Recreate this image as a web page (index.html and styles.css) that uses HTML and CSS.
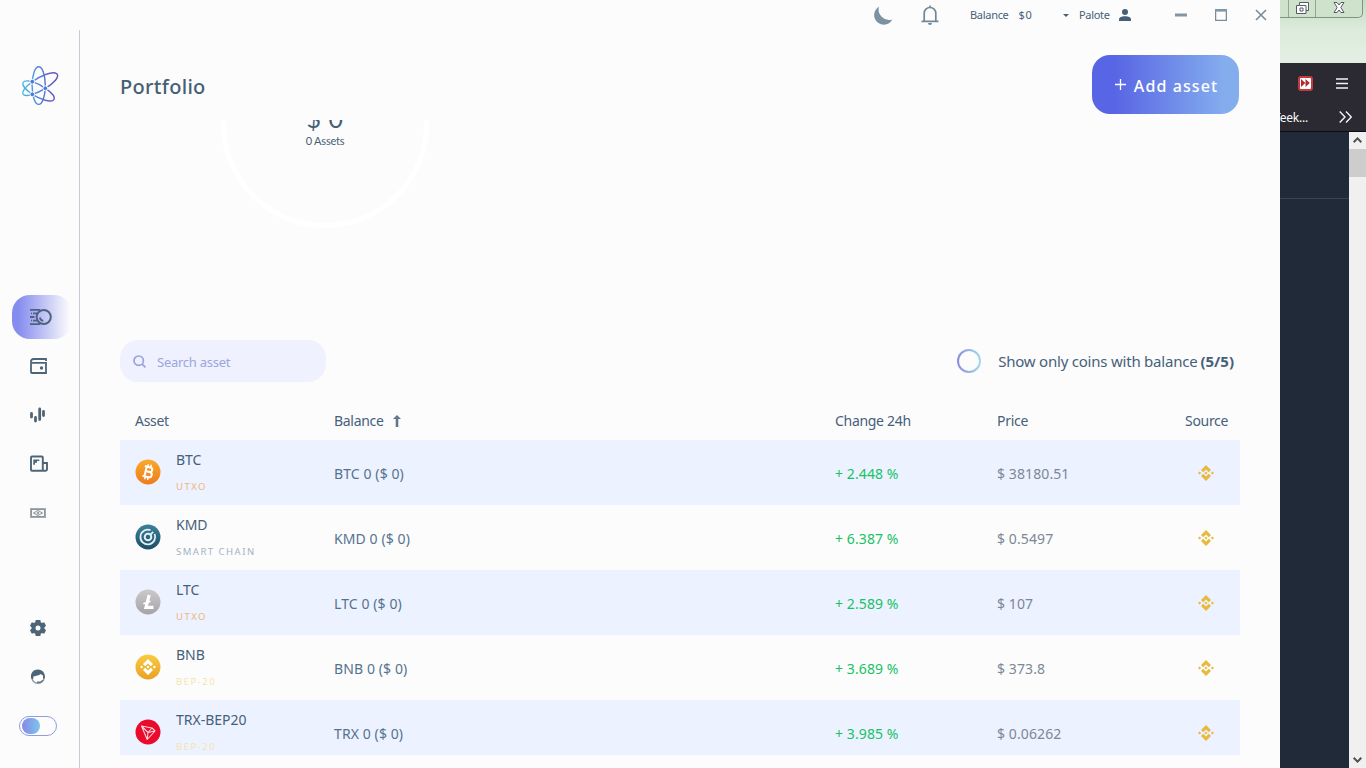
FILE: index.html
```html
<!DOCTYPE html>
<html lang="en">
<head>
    <meta charset="UTF-8">
    <meta name="viewport" content="width=device-width, initial-scale=1.0">
    <title>Portfolio</title>
    <link rel="stylesheet" href="styles.css">
</head>
<body>
    <!-- shared gradients and symbols -->
    <svg class="defs" width="0" height="0">
        <defs>
            <linearGradient id="logoGrad" x1="0" y1="0" x2="40" y2="0" gradientUnits="userSpaceOnUse">
                <stop offset="0" stop-color="#3fc4e6"/>
                <stop offset=".45" stop-color="#5585da"/>
                <stop offset="1" stop-color="#6a45b4"/>
            </linearGradient>
            <linearGradient id="btcGrad" x1="0" y1="0" x2="0" y2="1">
                <stop offset="0" stop-color="#f9aa2b"/>
                <stop offset="1" stop-color="#ee7c1c"/>
            </linearGradient>
            <linearGradient id="kmdGrad" x1="0" y1="0" x2="0" y2="1">
                <stop offset="0" stop-color="#3a8298"/>
                <stop offset="1" stop-color="#1b4f68"/>
            </linearGradient>
            <linearGradient id="ltcGrad" x1="0" y1="0" x2="0" y2="1">
                <stop offset="0" stop-color="#cbc9ca"/>
                <stop offset="1" stop-color="#a5a4a6"/>
            </linearGradient>
            <linearGradient id="bnbGrad" x1="0" y1="0" x2="0" y2="1">
                <stop offset="0" stop-color="#f8cc3e"/>
                <stop offset="1" stop-color="#eaa027"/>
            </linearGradient>
        </defs>
        <symbol id="binance" viewBox="0 0 16 16">
            <path d="M8 0l5 5-2.200 2.200L8 4.400 5.200 7.200 3 5zM8 16l5-5-2.200-2.200L8 11.600 5.200 8.800 3 11zM1.600 6.400L3.200 8 1.600 9.600 0 8zM14.400 6.400L16 8l-1.600 1.600L12.800 8zM8 6.500L9.500 8 8 9.500 6.500 8z"/>
        </symbol>
    </svg>

    <div class="desktop">
        <div class="app">
            <header class="titlebar">
                <svg class="moon" width="20" height="20" viewBox="0 0 20 20"><path d="M6 .8A9.600 9.600 0 1 0 19.300 13.500 10.500 10.500 0 0 1 6 .8z"/></svg>
                <svg class="bell" width="18" height="20" viewBox="0 0 18 20"><path d="M9 .4v2M3.200 16V8.300a5.800 5.800 0 0 1 11.600 0V16M.5 16.300h17"/><path class="clapper" d="M7 18h4a2 2 0 0 1-4 0z"/></svg>
                <div class="balance"><span>Balance</span><span class="sum">$0</span></div>
                <div class="user">
                    <i class="caret"></i>
                    <span>Palote</span>
                    <svg width="12" height="12" viewBox="0 0 12 12"><circle cx="6" cy="3" r="3"/><path d="M0 12v-1.500C0 8.500 2.500 7.300 6 7.300s6 1.200 6 3.200V12z"/></svg>
                </div>
                <div class="window-buttons">
                    <svg width="12" height="12" viewBox="0 0 12 12"><path class="fill" d="M0 4.500h12v3H0z"/></svg>
                    <svg width="12" height="12" viewBox="0 0 12 12"><path d="M.6.600h10.800v10.800H.6z"/><path class="fill" d="M0 0h12v2.600H0z"/></svg>
                    <svg width="12" height="12" viewBox="0 0 12 12"><path class="cross" d="M1 1l10 10M11 1L1 11"/></svg>
                </div>
            </header>

            <div class="layout">
                <aside class="sidebar">
                    <svg class="logo" width="40" height="40" viewBox="0 0 40 40">
                        <g fill="none" stroke="url(#logoGrad)" stroke-width="1.400">
                            <ellipse cx="18.700" cy="19.600" rx="6.600" ry="18.800"/>
                            <path d="M12.300 15.700C20 10 32 5 36.500 7.500c4 3-3 10-11.200 14.800-4 2.500-8.500 4.700-13 6-4.500 1.400-8.600 1.300-9.300-.3-1-3 3.500-8 9.300-12.300z"/>
                            <path d="M12.300 28.300C20 33 30 37 33.500 34c2.500-2.500-1.500-7.500-8.200-11.700-4-2.700-8.500-5.200-13-6.600-4.500-1.200-8.300-.9-9.300.8-1.200 2.700 3.500 7.800 9.300 11.800z"/>
                        </g>
                        <g fill="#4b7bd4" stroke="#fcfcfc" stroke-width="1"><circle cx="12.300" cy="15.700" r="2.400"/><circle cx="12.300" cy="28.300" r="2.400"/><circle cx="25.300" cy="22.300" r="2.400"/></g>
                    </svg>
                    <nav class="nav">
                        <a class="nav-item active">
                            <svg width="22" height="18" viewBox="0 0 22 18"><g fill="none" stroke="#4d6180"><circle cx="13.700" cy="9" r="7.100" stroke-width="2"/><path d="M0 1.900h10M3 5.400h4M0 9h4.500M3 12.600h4M0 16.100h10" stroke-width="1.800"/><path d="M1 5.400h1M1 12.600h1" stroke-width="1.500"/><path d="M9.800 9.500a4 4 0 0 0 3.500 3.300" stroke-width="1.700"/></g></svg>
                        </a>
                        <a class="nav-item">
                            <svg width="18" height="18" viewBox="0 0 18 18"><g fill="none" stroke="#4d6577" stroke-width="1.800"><path d="M16 4V2H3.500A2.500 2.500 0 0 0 1 4.500V15a1 1 0 0 0 1 1h14V5.800H2"/></g><circle cx="11.500" cy="11" r="1.700" fill="#4d6577"/></svg>
                        </a>
                        <a class="nav-item">
                            <svg width="18" height="18" viewBox="0 0 18 18"><g stroke="#4d6577" stroke-width="2.800" stroke-linecap="round"><path d="M1.500 7.500V11M5.500 11.500V15M9.700 3v10.500M13.500 5.500v4"/></g></svg>
                        </a>
                        <a class="nav-item">
                            <svg width="18" height="18" viewBox="0 0 18 18"><g fill="none" stroke="#4d6577" stroke-width="1.900"><path d="M12.800 15.600V2.500a1 1 0 0 0-1-1H2a1 1 0 0 0-1 1v12.200a1 1 0 0 0 1 1h13.500a1.500 1.500 0 0 0 1.500-1.500V8h-4"/></g><path d="M3.300 4.500h6v1.600H7v1.600H5v2H3.300z" fill="#4d6577"/></svg>
                        </a>
                        <a class="nav-item">
                            <svg width="17" height="12" viewBox="0 0 17 12"><path fill="#a3a9ac" d="M0 1h16v10H0z"/><path fill="#f7f7f7" d="M2 3h12v6H2z"/><path fill="none" stroke="#8c9499" d="M1.500 2.500h13v7h-13zM3.500 6L8 3.500 12.500 6 8 8.500z"/><circle cx="8" cy="6" r="1.300" fill="#9aa2a6"/></svg>
                        </a>
                    </nav>
                    <div class="nav nav-bottom">
                        <a class="nav-item">
                            <svg width="16" height="16" viewBox="0 0 16 16"><path fill="#4d6577" fill-rule="evenodd" d="M5.700 0h4.600l.5 2.300 1.200.7 2.200-.7 1.800 3.500L14.400 7.400v1.200L16 10.200l-1.800 3.500-2.200-.7-1.200.7-.5 2.300H5.700l-.5-2.300L4 13l-2.200.7L0 10.200l1.600-1.600V7.400L0 5.800l1.800-3.500L4 3l1.200-.7zM8 5.500a2.500 2.500 0 1 0 0 5 2.500 2.500 0 0 0 0-5z"/></svg>
                        </a>
                        <a class="nav-item">
                            <svg width="16" height="16" viewBox="0 0 16 16"><circle cx="8" cy="8" r="6.300" fill="#fff" stroke="#8293a0" stroke-width="1.200"/><path fill="#4d6577" d="M1 9C.5 4 3.500.600 8 .600s7.500 3.500 6.600 8.900H13V6.500L10.500 5C9 6.800 6 6.500 3.500 7.500L3 10.500z"/><path fill="none" stroke="#66798a" stroke-width="1.400" d="M7 13.200h3.500l2.500-2"/></svg>
                        </a>
                        <a class="nav-item"><span class="switch"></span></a>
                    </div>
                </aside>

                <main class="main">
                    <div class="page-head">
                        <h1>Portfolio</h1>
                        <button class="add-button"><svg width="11" height="11" viewBox="0 0 11 11"><path d="M5.500 0v11M0 5.500h11"/></svg>Add asset</button>
                    </div>

                    <div class="scroll">
                        <section class="chart">
                            <div class="donut">
                                <div class="donut-total">$ 0</div>
                                <div class="donut-count">0 Assets</div>
                            </div>
                        </section>

                        <div class="filters">
                            <div class="search">
                                <svg width="13" height="13" viewBox="0 0 13 13"><circle cx="5.700" cy="5.700" r="4.700"/><path d="M9.200 9.200l3.200 3.200"/></svg>
                                <span>Search asset</span>
                            </div>
                            <label class="only-balance">
                                <i class="radio"></i>
                                <span>Show only coins with balance</span><b>(5/5)</b>
                            </label>
                        </div>

                        <div class="table">
                            <div class="row head">
                                <span>Asset</span>
                                <span>Balance <svg class="sort" width="8" height="12" viewBox="0 0 8 12"><path d="M4 0l4 4H5.300v8H2.700V4H0z"/></svg></span>
                                <span>Change 24h</span>
                                <span>Price</span>
                                <span>Source</span>
                            </div>
                            <div class="row">
                                <div class="asset">
                                    <svg class="coin" viewBox="0 0 26 26"><circle cx="13" cy="13" r="12.500" fill="url(#btcGrad)"/><g transform="rotate(14 13 13)" fill="none" stroke="#fff" stroke-width="2"><path d="M8.500 8h5.800a2.300 2.300 0 0 1 0 4.700h-4M10.500 12.700h4.300a2.600 2.600 0 0 1 0 5.200H8.500M10.500 8v10"/><path d="M11.500 5.200V8M14.500 5.200V8M11.500 18v2.800M14.500 18v2.800" stroke-width="1.500"/></g></svg>
                                    <div><div class="name">BTC</div><div class="tag utxo">UTXO</div></div>
                                </div>
                                <span class="amount">BTC 0 ($ 0)</span>
                                <span class="change">+ 2.448 %</span>
                                <span class="price">$ 38180.51</span>
                                <svg class="source"><use href="#binance"/></svg>
                            </div>
                            <div class="row">
                                <div class="asset">
                                    <svg class="coin" viewBox="0 0 26 26"><circle cx="13" cy="13" r="12.500" fill="url(#kmdGrad)"/><g fill="none" stroke="#e4f0f4" stroke-width="1.800"><path d="M15.500 6.100A7.400 7.400 0 1 0 19.600 10"/><circle cx="13" cy="13" r="3.300" stroke-width="2"/><path d="M15.200 10.800l3-3"/></g></svg>
                                    <div><div class="name">KMD</div><div class="tag smart">SMART CHAIN</div></div>
                                </div>
                                <span class="amount">KMD 0 ($ 0)</span>
                                <span class="change">+ 6.387 %</span>
                                <span class="price">$ 0.5497</span>
                                <svg class="source"><use href="#binance"/></svg>
                            </div>
                            <div class="row">
                                <div class="asset">
                                    <svg class="coin" viewBox="0 0 26 26"><circle cx="13" cy="13" r="12.500" fill="url(#ltcGrad)"/><path d="M14.200 6l-3.200 12.300h7.500" fill="none" stroke="#fff" stroke-width="3.200"/><path d="M8.300 14.800l7.200-2.600" fill="none" stroke="#fff" stroke-width="1.500"/></svg>
                                    <div><div class="name">LTC</div><div class="tag utxo">UTXO</div></div>
                                </div>
                                <span class="amount">LTC 0 ($ 0)</span>
                                <span class="change">+ 2.589 %</span>
                                <span class="price">$ 107</span>
                                <svg class="source"><use href="#binance"/></svg>
                            </div>
                            <div class="row">
                                <div class="asset">
                                    <svg class="coin" viewBox="0 0 26 26"><circle cx="13" cy="13" r="12.500" fill="url(#bnbGrad)"/><use href="#binance" x="5" y="5" width="16" height="16" fill="#fff"/></svg>
                                    <div><div class="name">BNB</div><div class="tag bep">BEP-20</div></div>
                                </div>
                                <span class="amount">BNB 0 ($ 0)</span>
                                <span class="change">+ 3.689 %</span>
                                <span class="price">$ 373.8</span>
                                <svg class="source"><use href="#binance"/></svg>
                            </div>
                            <div class="row">
                                <div class="asset">
                                    <svg class="coin" viewBox="0 0 26 26"><circle cx="13" cy="13" r="12.500" fill="#e90a2c"/><path d="M6.500 7l10.500 2 3 3-7.800 8.500zM6.500 7l6.500 6.500 4-4.500M13 13.500l7-1.500M13 13.500l-.8 7" fill="none" stroke="#fbd5db" stroke-width="1.100" stroke-linejoin="round"/></svg>
                                    <div><div class="name">TRX-BEP20</div><div class="tag bep">BEP-20</div></div>
                                </div>
                                <span class="amount">TRX 0 ($ 0)</span>
                                <span class="change">+ 3.985 %</span>
                                <span class="price">$ 0.06262</span>
                                <svg class="source"><use href="#binance"/></svg>
                            </div>
                        </div>
                    </div>
                </main>
            </div>
        </div>

        <!-- browser window behind the app -->
        <div class="browser">
            <div class="glass">
                <div class="caption">
                    <span class="cap-min"></span>
                    <span class="cap-max"><svg width="13" height="12" viewBox="0 0 13 12"><path d="M3.500.500h9v8h-2.500v3H.5v-8h3z" fill="#fff" stroke="#555a66"/><path d="M3.500 3.500H10v5M4 6h3v3H4z" fill="none" stroke="#555a66"/></svg></span>
                    <span class="cap-close"><svg width="12" height="11" viewBox="0 0 12 11"><path d="M1 .500h3L6 3 8 .500h3L7.800 5.500 11 10.500H8L6 8l-2 2.500H1l3.200-5z" fill="#fff" stroke="#555a66"/></svg></span>
                </div>
            </div>
            <div class="toolbar">
                <div class="tool-row">
                    <span class="ext"><svg width="9" height="8" viewBox="0 0 9 8"><path d="M0 0l4.300 4L0 8zM4.500 0l4.300 4-4.300 4z"/></svg></span>
                    <svg width="12" height="11" viewBox="0 0 12 11"><path d="M0 1h12M0 5.500h12M0 10h12"/></svg>
                </div>
                <div class="tool-row bookmarks">
                    <span>Teek...</span>
                    <svg width="13" height="12" viewBox="0 0 13 12"><path d="M.7.500L6 6 .7 11.500M7 .500L12.300 6 7 11.500"/></svg>
                </div>
            </div>
            <div class="page">
                <div class="page-body"></div>
                <div class="scrollbar">
                    <svg width="9" height="6" viewBox="0 0 9 6"><path d="M.7 5.200L4.500 1.400l3.800 3.800"/></svg>
                    <div class="thumb"></div>
                    <svg class="down" width="9" height="6" viewBox="0 0 9 6"><path d="M.7.800l3.800 3.800L8.300.8"/></svg>
                </div>
            </div>
        </div>
    </div>
</body>
</html>
```
FILE: styles.css
```css
* { margin: 0; padding: 0; box-sizing: border-box; }

body {
    font-family: "Noto Sans", "Open Sans", sans-serif;
    font-size: 14px;
    color: #46607a;
    background: #202a38;
    overflow: hidden;
}

svg { display: block; flex-shrink: 0; }
.defs { position: absolute; }

.desktop {
    display: flex;
    height: 100vh;
}

.app {
    width: 1280px;
    background: #fcfcfc;
    flex-shrink: 0;
}

/* title bar */
.titlebar {
    height: 30px;
    display: flex;
    align-items: center;
    justify-content: flex-end;
    padding-right: 13px;
    font-size: 11px;
    letter-spacing: -.3px;
}

.titlebar span { margin-top: -1px; }
.moon { fill: #7d92a1; margin: 1px 28px 0 0; }
.bell { fill: none; stroke: #718796; stroke-width: 1.700; margin-right: 31px; }
.bell .clapper { fill: #718796; stroke: none; }
.balance { display: flex; gap: 10px; width: 93px; }
.balance .sum { letter-spacing: .8px; }
.user { display: flex; align-items: center; width: 112px; }
.user svg { fill: #465f75; margin-left: 9px; }

.caret {
    border: 3px solid transparent;
    border-top-color: #465f75;
    border-bottom: 0;
    margin-right: 10px;
}

.window-buttons { display: flex; gap: 28px; }
.window-buttons svg { fill: none; stroke: #778d9b; stroke-width: 1.300; }
.window-buttons .fill { fill: #8296a4; stroke: none; }
.window-buttons .cross { stroke-width: 1.600; }

.layout {
    display: flex;
    height: 738px;
}

/* sidebar */
.sidebar {
    width: 80px;
    border-right: 1px solid #c9cad6;
    padding: 36px 0 20px;
    display: flex;
    flex-direction: column;
    flex-shrink: 0;
}

.logo { margin: 0 0 189px 20px; }
.nav { display: flex; flex-direction: column; gap: 5px; padding-left: 12px; }
.nav-bottom { margin-top: auto; }

.nav-item {
    height: 44px;
    width: 60px;
    padding-left: 18px;
    display: flex;
    align-items: center;
    border-radius: 18px;
}

.nav-item.active { background: linear-gradient(90deg, #858ced 10%, #fcfcfc 97%); }

.switch {
    width: 38px;
    height: 20px;
    margin-left: -11px;
    border: 1px solid #8d9ee0;
    border-radius: 10px;
    padding: 1px 2px;
    flex-shrink: 0;
}

.switch::before {
    content: "";
    display: block;
    width: 18px;
    height: 16px;
    border-radius: 8px;
    background: linear-gradient(90deg, #8589e4, #7dc5ed);
}

/* main */
.main { flex: 1; padding: 0 40px; }

.page-head {
    height: 90px;
    padding: 25px 1px 6px 0;
    display: flex;
    justify-content: space-between;
    align-items: center;
}

h1 {
    font-size: 20px;
    font-weight: 500;
    color: #465f75;
    padding-top: 3px;
    letter-spacing: .3px;
}

.add-button {
    width: 147px;
    height: 59px;
    border: 0;
    border-radius: 18px;
    background: linear-gradient(90deg, #5865e4 15%, #84adee 90%);
    color: #fff;
    font: 500 16px "Noto Sans", sans-serif;
    letter-spacing: 1.100px;
    display: flex;
    align-items: center;
    justify-content: center;
    gap: 8px;
    padding: 2px 0 0 2px;
}

.add-button svg { stroke: #fff; stroke-width: 1.300; margin-top: -2px; }

.scroll { height: 635px; overflow: hidden; }

.chart { height: 220px; padding-left: 101px; overflow: hidden; }

.donut {
    width: 208px;
    height: 208px;
    margin-top: -100px;
    border: 5px solid #fff;
    border-radius: 50%;
    text-align: center;
    padding-top: 76px;
    color: #465f75;
    font-family: Lato, sans-serif;
}

.donut-total { font-size: 25px; line-height: 34px; height: 32px; letter-spacing: .5px; }
.donut-count { font-size: 11px; line-height: 16px; letter-spacing: -.2px; }

.filters {
    display: flex;
    justify-content: space-between;
    height: 42px;
    padding-right: 6px;
}

.search {
    width: 206px;
    background: #eff1ff;
    border-radius: 18px;
    display: flex;
    align-items: center;
    gap: 11px;
    padding-left: 13px;
    font-size: 13px;
    letter-spacing: -.25px;
    color: #9aa6dc;
}

.search span { margin-top: 1px; }
.search svg { fill: none; stroke: #98a2df; stroke-width: 1.700; }

.only-balance { display: flex; align-items: center; font-size: 15px; letter-spacing: -.22px; }
.only-balance b { margin-left: 3px; letter-spacing: 0; }

.radio {
    width: 24px;
    height: 24px;
    border: 2px solid transparent;
    border-radius: 50%;
    margin-right: 17px;
    background: linear-gradient(#fcfcfc, #fcfcfc) padding-box, linear-gradient(90deg, #8d8cdb, #a4daed) border-box;
}

/* table */
.row {
    display: grid;
    grid-template-columns: 199px 501px 162px 188px 44px;
    align-items: center;
    height: 65px;
    padding: 0 11px 0 15px;
}

.row:nth-child(even) { background: #ecf2ff; }
.row.head { height: 58px; padding-top: 18px; letter-spacing: -.3px; }
.sort { display: inline-block; margin-left: 6px; vertical-align: -1px; fill: #61788c; }

.asset { display: flex; align-items: center; gap: 15px; margin-top: -1px; }
.coin { width: 26px; height: 26px; }
.name { line-height: 20px; }
.tag { font-size: 9.500px; line-height: 14px; letter-spacing: 1.500px; margin: 10px 0 1px; }
.utxo { color: #ecb57b; }
.smart { color: #a3b3c2; }
.bep { color: #f7e3ad; }

.amount, .change, .price { padding-top: 1px; letter-spacing: .1px; }
.amount { color: #55738f; }
.change { color: #18c265; }
.price { color: #7c8797; }
.source { width: 16px; height: 16px; fill: #e8b93f; margin: 1px 0 0 13px; }

/* browser window */
.browser {
    flex: 1;
    min-width: 0;
    display: flex;
    flex-direction: column;
    background: #202a38;
}

.glass {
    height: 63px;
    background: linear-gradient(#c5dcc3, #dcebdc 30px, #e4efe3);
}

.caption {
    display: flex;
    width: 83px;
    height: 18px;
    border: 1px solid #7d9580;
    border-top: 0;
    border-left: 0;
    border-radius: 0 0 5px 0;
    background: #cfe2cb;
}

.caption span { display: flex; align-items: center; justify-content: center; padding-bottom: 2px; }
.cap-min { width: 9px; border-right: 1px solid #8fa78f; }
.cap-max { width: 27px; border-right: 1px solid #8fa78f; }
.cap-close { flex: 1; }

.toolbar { height: 69px; background: #2b2a33; border-bottom: 1px solid #0c0c12; }
.toolbar svg { fill: none; stroke: #f4f4f6; stroke-width: 1.400; }

.tool-row {
    display: flex;
    align-items: center;
    justify-content: space-between;
    height: 40px;
    padding: 0 18px;
}

.tool-row.bookmarks {
    height: 28px;
    padding: 0 14px 0 0;
    color: #fbfbfe;
    font-size: 12px;
    letter-spacing: -.2px;
}

/* the start of the bookmark is hidden by the app window */
.bookmarks span { margin-left: -6px; }
.browser { overflow: hidden; }

.ext {
    width: 15px;
    height: 15px;
    border: 2px solid #c43b3e;
    border-radius: 3px;
    background: #fff;
    display: flex;
    align-items: center;
    justify-content: center;
}

.toolbar .ext svg { fill: #b12b2f; stroke: none; }

.page { flex: 1; display: flex; }
.page-body { flex: 1; }

.page-body::before {
    content: "";
    display: block;
    height: 66px;
    border-bottom: 1px solid #3a4350;
}

.scrollbar {
    width: 17px;
    background: #f0f0f0;
    display: flex;
    flex-direction: column;
    align-items: center;
    padding: 5px 0;
}

.scrollbar svg { fill: none; stroke: #505050; stroke-width: 2; }
.thumb { width: 17px; height: 28px; margin-top: 6px; background: #cdcdcd; }
.scrollbar .down { margin-top: auto; }
```
